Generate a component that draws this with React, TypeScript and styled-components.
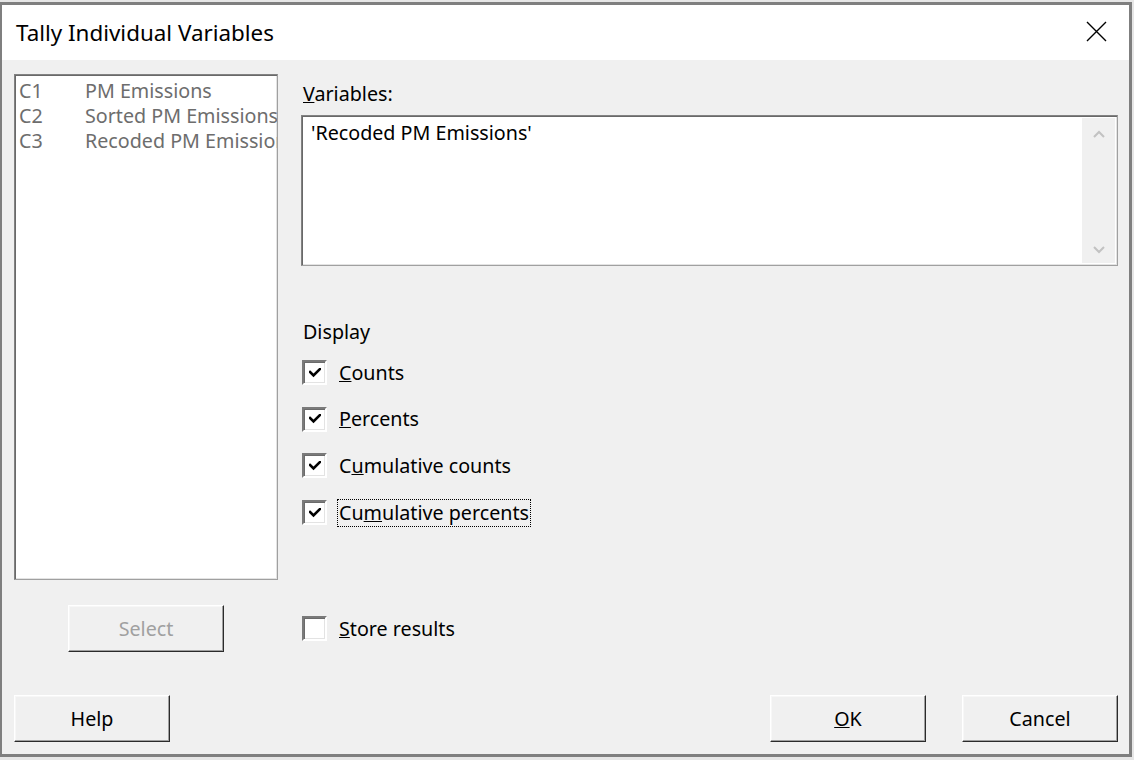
import React from 'react';
import styled, { createGlobalStyle, css } from 'styled-components';

const GlobalStyle = createGlobalStyle`
  html, body {
    margin: 0;
    padding: 0;
    background: #e6e6e6;
    font-family: 'Noto Sans', 'Open Sans', sans-serif;
    overflow: hidden;
  }
`;

const Window = styled.div`
  margin-top: 2px;
  width: 1132px;
  height: 755px;
  box-sizing: border-box;
  border: 3px solid #7f7f7f;
  border-left-width: 2px;
  border-top-width: 3px;
  display: flex;
  flex-direction: column;
  background: #f0f0f0;
`;

const TitleBar = styled.div`
  height: 55px;
  background: #ffffff;
  display: flex;
  align-items: center;
  justify-content: space-between;
  padding: 0 22px 0 14px;
  flex-shrink: 0;
`;

const Title = styled.span`
  font-size: 22.4px;
  color: #000;
  margin-top: -1px;
`;

const CloseButton = styled.div`
  width: 22px;
  height: 22px;
  display: flex;
  align-items: center;
  justify-content: center;
  margin-top: -2px;
`;

const Body = styled.div`
  flex: 1;
  display: flex;
  flex-direction: column;
  padding: 14px 11px 12px 12px;
  font-size: 19.7px;
`;

const Main = styled.div`
  display: grid;
  grid-template-columns: 264px 1fr;
  column-gap: 23px;
`;

const LeftColumn = styled.div`
  display: flex;
  flex-direction: column;
  align-items: center;
`;

const sunken = css`
  box-sizing: border-box;
  border: 1px solid #828282;
  border-right-color: #a0a0a0;
  border-bottom-color: #a0a0a0;
  box-shadow: inset 1px 1px 0 #696969, inset -1px -1px 0 #e3e3e3;
  background: #ffffff;
`;

const ListBox = styled.div`
  ${sunken};
  width: 264px;
  height: 506px;
  padding: 3px 0 0 4px;
  overflow: hidden;
`;

const ListRow = styled.div`
  display: flex;
  height: 25px;
  line-height: 25px;
  color: #6d6d6d;
  white-space: nowrap;
`;

const ColName = styled.span`
  width: 66px;
  flex-shrink: 0;
`;

const Button = styled.button<{ $disabled?: boolean }>`
  width: 156px;
  height: 47px;
  box-sizing: border-box;
  background: #f0f0f0;
  border: 1px solid;
  border-color: #ffffff #2b2b2b #2b2b2b #ffffff;
  box-shadow: inset -1px -1px 0 #a0a0a0, inset 1px 1px 0 #f7f7f7;
  font-family: inherit;
  font-size: 19.7px;
  color: ${(p) => (p.$disabled ? '#a0a0a0' : '#000')};
  padding: 0;
`;

const SelectButton = styled(Button)`
  margin-top: 25px;
`;

const RightColumn = styled.div`
  display: flex;
  flex-direction: column;
`;

const Label = styled.div<{ $top: number }>`
  height: 25px;
  line-height: 25px;
  margin-top: ${(p) => p.$top}px;
  padding-left: 2px;
  color: #000;
`;

const TextBox = styled.div`
  ${sunken};
  margin-top: 9px;
  height: 151px;
  display: flex;
  padding: 2px;
`;

const TextArea = styled.div`
  flex: 1;
  padding: 2px 0 0 7px;
  line-height: 25px;
  color: #000;
`;

const ScrollBar = styled.div`
  width: 33px;
  background: #f0f0f0;
  display: flex;
  flex-direction: column;
  justify-content: space-between;
  align-items: center;
  padding: 12px 0 9px;
`;

const CheckList = styled.div`
  display: flex;
  flex-direction: column;
  gap: 21.7px;
  margin-top: 16px;
`;

const CheckRow = styled.div<{ $top?: number }>`
  display: flex;
  align-items: center;
  height: 25px;
  margin-top: ${(p) => p.$top ?? 0}px;
`;

const Box = styled.div`
  width: 25px;
  height: 25px;
  box-sizing: border-box;
  margin-left: 1px;
  border: 2px solid;
  border-color: #7a7a7a #ffffff #ffffff #7a7a7a;
  box-shadow: inset 1px 1px 0 #6b6b6b, inset -1px -1px 0 #e3e3e3;
  background: #ffffff;
  display: flex;
  align-items: center;
  justify-content: center;
`;

const CheckText = styled.span<{ $focused?: boolean }>`
  margin-left: 11px;
  padding: 0 1px;
  line-height: 26px;
  color: #000;
  outline: ${(p) => (p.$focused ? '1px dotted #000' : 'none')};
`;

const Footer = styled.div`
  display: flex;
  align-items: center;
  margin-top: 43px;
`;

const Spacer = styled.div`
  flex: 1;
`;

const FooterGap = styled.div`
  width: 36px;
`;

const Check = () => (
  <svg width="12" height="10" viewBox="0 0 12 10">
    <path d="M1 4 L4.5 7.5 L11 1" fill="none" stroke="#000" strokeWidth="2.6" strokeLinecap="square" />
  </svg>
);

const Chevron = ({ up }: { up?: boolean }) => (
  <svg width="12" height="8" viewBox="0 0 12 8">
    <path
      d={up ? 'M1 7 L6 2 L11 7' : 'M1 1 L6 6 L11 1'}
      fill="none"
      stroke="#c2c2c2"
      strokeWidth="2"
    />
  </svg>
);

const columns = [
  { id: 'C1', name: 'PM Emissions' },
  { id: 'C2', name: 'Sorted PM Emissions' },
  { id: 'C3', name: 'Recoded PM Emissions' },
];

const options: { label: React.ReactNode; checked: boolean; focused?: boolean }[] = [
  { label: <><u>C</u>ounts</>, checked: true },
  { label: <><u>P</u>ercents</>, checked: true },
  { label: <>C<u>u</u>mulative counts</>, checked: true },
  { label: <>Cu<u>m</u>ulative percents</>, checked: true, focused: true },
];

export default function App() {
  return (
    <>
      <GlobalStyle />
      <Window>
        <TitleBar>
          <Title>Tally Individual Variables</Title>
          <CloseButton>
            <svg width="21" height="21" viewBox="0 0 21 21">
              <path d="M1 1 L20 20 M20 1 L1 20" stroke="#000" strokeWidth="1.4" />
            </svg>
          </CloseButton>
        </TitleBar>
        <Body>
          <Main>
            <LeftColumn>
              <ListBox>
                {columns.map((c) => (
                  <ListRow key={c.id}>
                    <ColName>{c.id}</ColName>
                    <span>{c.name}</span>
                  </ListRow>
                ))}
              </ListBox>
              <SelectButton $disabled>Select</SelectButton>
            </LeftColumn>
            <RightColumn>
              <Label $top={7}>
                <u>V</u>ariables:
              </Label>
              <TextBox>
                <TextArea>'Recoded PM Emissions'</TextArea>
                <ScrollBar>
                  <Chevron up />
                  <Chevron />
                </ScrollBar>
              </TextBox>
              <Label $top={53}>Display</Label>
              <CheckList>
                {options.map((o, i) => (
                  <CheckRow key={i}>
                    <Box>{o.checked && <Check />}</Box>
                    <CheckText $focused={o.focused}>{o.label}</CheckText>
                  </CheckRow>
                ))}
              </CheckList>
              <CheckRow $top={91}>
                <Box />
                <CheckText>
                  <u>S</u>tore results
                </CheckText>
              </CheckRow>
            </RightColumn>
          </Main>
          <Footer>
            <Button>Help</Button>
            <Spacer />
            <Button>
              <u>O</u>K
            </Button>
            <FooterGap />
            <Button>Cancel</Button>
          </Footer>
        </Body>
      </Window>
    </>
  );
}
